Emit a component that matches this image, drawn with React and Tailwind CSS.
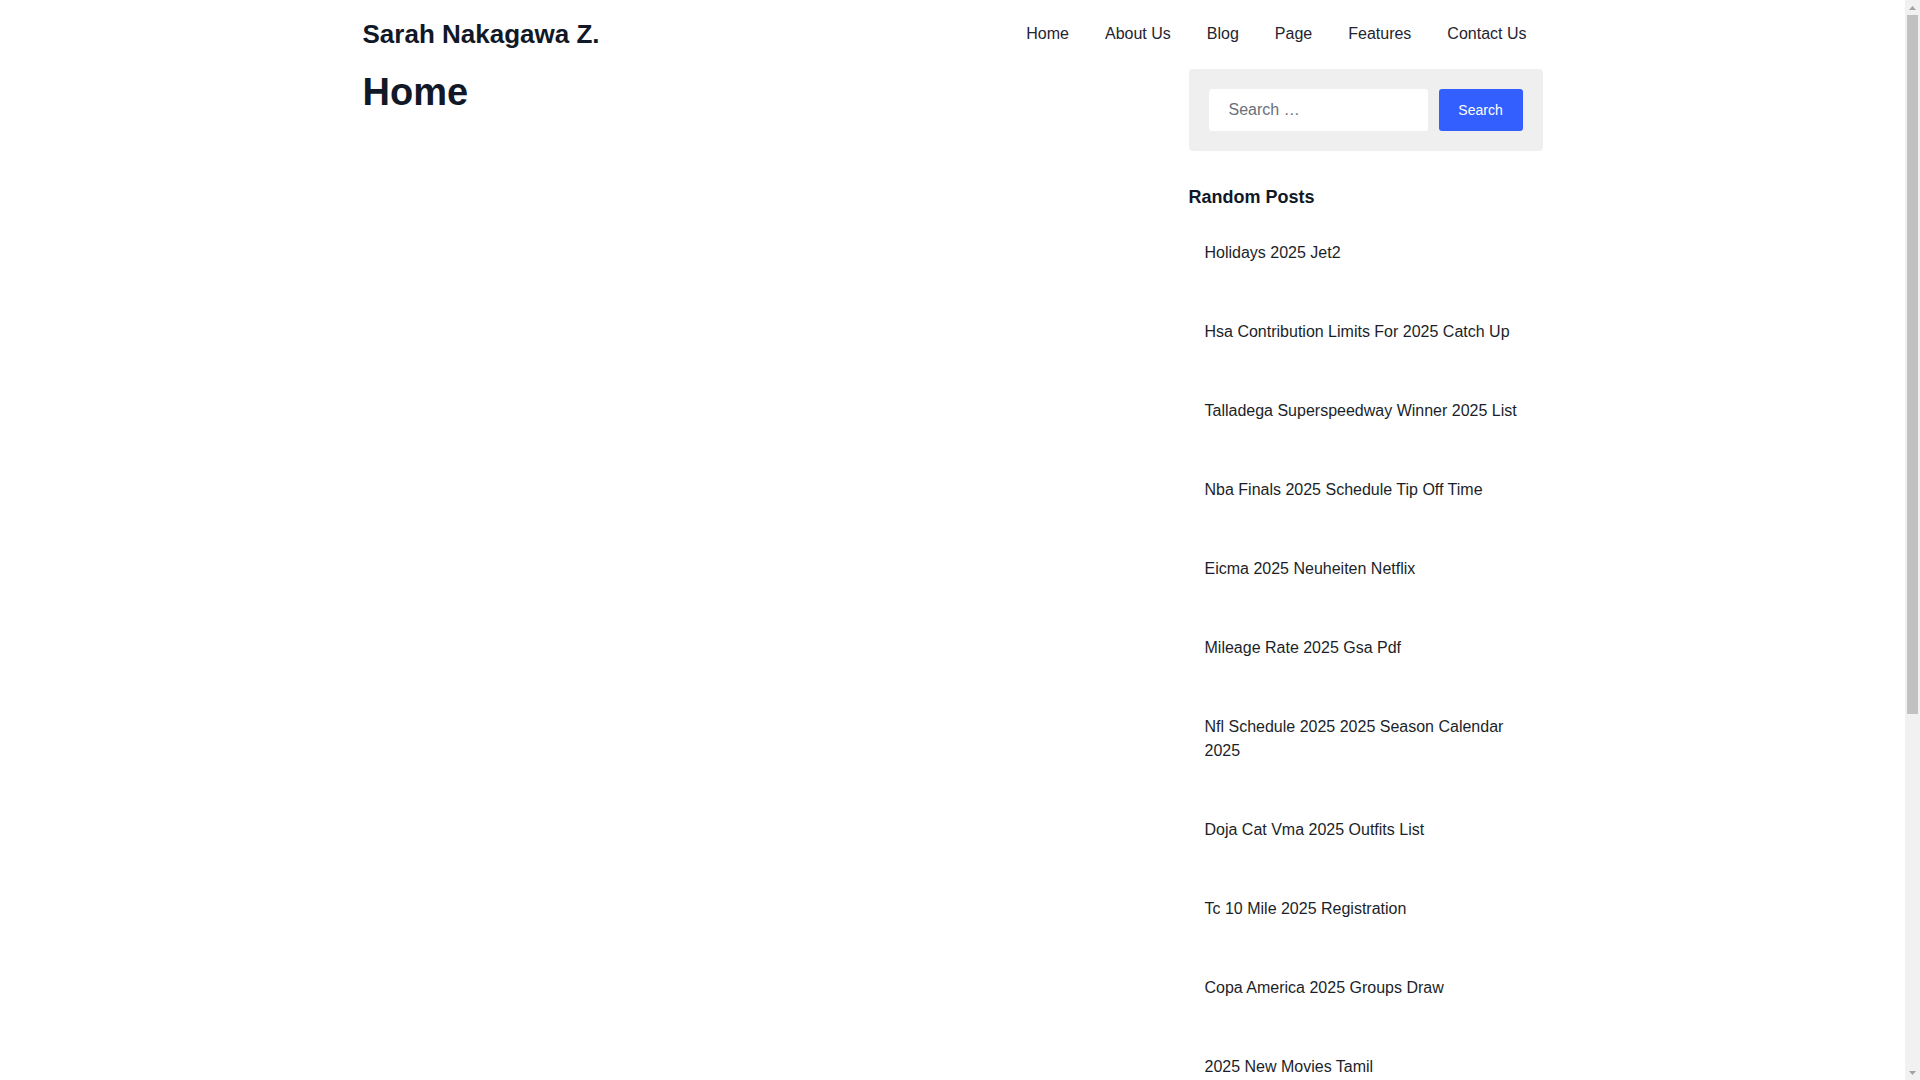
import React from "react";

/* ===== DATA ===== */
const navLinks = ["Home", "About Us", "Blog", "Page", "Features", "Contact Us"];

const randomPosts = [
  "Holidays 2025 Jet2",
  "Hsa Contribution Limits For 2025 Catch Up",
  "Talladega Superspeedway Winner 2025 List",
  "Nba Finals 2025 Schedule Tip Off Time",
  "Eicma 2025 Neuheiten Netflix",
  "Mileage Rate 2025 Gsa Pdf",
  "Nfl Schedule 2025 2025 Season Calendar 2025",
  "Doja Cat Vma 2025 Outfits List",
  "Tc 10 Mile 2025 Registration",
  "Copa America 2025 Groups Draw",
  "2025 New Movies Tamil",
];

/* ===== WINDOW SCROLLBAR (as seen in the screenshot) ===== */
function Scrollbar() {
  return (
    <div className="w-[15px] shrink-0 h-full bg-[#f1f1f1] flex flex-col">
      <div className="h-[15px] flex items-center justify-center">
        <svg width="7" height="4" viewBox="0 0 7 4">
          <path d="M0 4 L3.5 0 L7 4 Z" fill="#a3a3a3" />
        </svg>
      </div>
      <div className="mx-[2px] h-[699px] bg-[#c1c1c1]" />
      <div className="flex-1" />
      <div className="h-[15px] flex items-center justify-center">
        <svg width="7" height="4" viewBox="0 0 7 4">
          <path d="M0 0 L3.5 4 L7 0 Z" fill="#a3a3a3" />
        </svg>
      </div>
    </div>
  );
}

/* ===== PAGE ===== */
export default function App() {
  return (
    <div
      className="h-[1080px] overflow-hidden flex bg-white text-[#111827]"
      style={{ fontFamily: '"Liberation Sans", Arial, sans-serif' }}
    >
      <div className="flex-1 min-w-0">
        <div className="max-w-[1180px] mx-auto min-h-[1622px]">
          {/* ===== HEADER ===== */}
          <header className="h-[69px] flex items-center justify-between">
            <a href="#" className="text-[26px] leading-[1.2] font-bold text-[#111827]">
              Sarah Nakagawa Z.
            </a>
            <nav className="mr-[16px] pb-[2px]">
              <ul className="flex gap-[36px] text-[16px] leading-[1.5] text-[#1f2430]">
                {navLinks.map((link) => (
                  <li key={link}>
                    <a href="#">{link}</a>
                  </li>
                ))}
              </ul>
            </nav>
          </header>

          {/* ===== MAIN + SIDEBAR ===== */}
          <div className="flex justify-between">
            <main className="flex-1 pt-px">
              <h1 className="text-[38px] leading-[1.2] font-bold text-[#111827]">Home</h1>
            </main>

            <aside className="w-[354px]">
              <div className="bg-[#efefef] rounded p-5 flex gap-[11px]">
                <input
                  type="search"
                  placeholder="Search …"
                  className="w-[219px] h-[42px] bg-white rounded-[3px] pl-5 text-[16px] text-[#111827] placeholder:text-[#6b6f7a] outline-none"
                />
                <button className="w-[84px] h-[42px] bg-[#335fff] rounded-[3px] text-white text-[14px]">
                  Search
                </button>
              </div>

              <h2 className="mt-[33px] text-[18px] leading-[27px] font-bold text-[#111827]">
                Random Posts
              </h2>
              <ul className="pt-[30px] pl-[16px] flex flex-col gap-[55px] text-[16px] leading-[24px] text-[#1c1f29]">
                {randomPosts.map((post) => (
                  <li key={post} className="pr-4">
                    <a href="#">{post}</a>
                  </li>
                ))}
              </ul>
            </aside>
          </div>
        </div>
      </div>
      <Scrollbar />
    </div>
  );
}
